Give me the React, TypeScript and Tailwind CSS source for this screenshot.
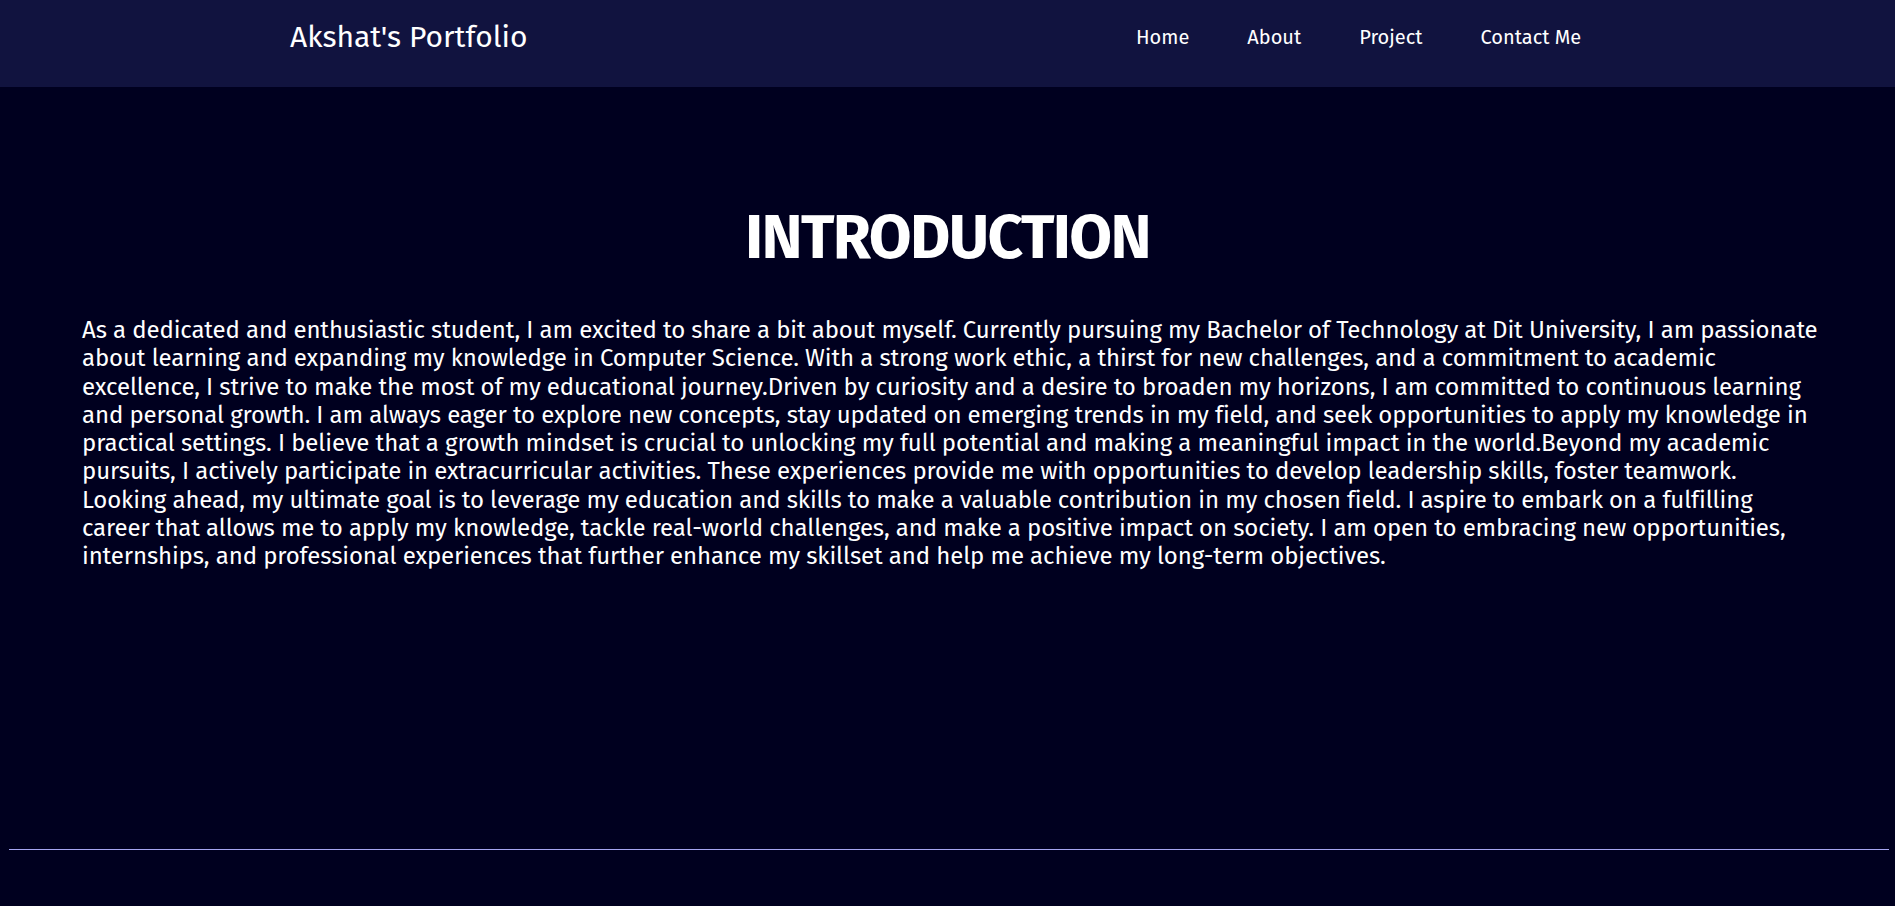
export default function App() {
  return (
    <div className="min-h-screen bg-[#00001f] font-['Fira_Sans','Lato',sans-serif] text-white">
      {/* ---------- NAVBAR ---------- */}
      <header className="h-[87px] bg-[#11133f] flex items-center pb-[13px] pl-[290px]">
        <div className="w-[846px] text-[30px] leading-[36px]">Akshat's Portfolio</div>
        <nav className="flex gap-[58px] text-[20px] leading-[24px]">
          <a href="#">Home</a>
          <a href="#">About</a>
          <a href="#">Project</a>
          <a href="#">Contact Me</a>
        </nav>
      </header>

      {/* ---------- INTRO ---------- */}
      <main className="pt-[112px]">
        <h1 className="text-center text-[62px] leading-[77px] font-bold tracking-[-1.6px]">INTRODUCTION</h1>
        <p className="mt-[40px] pl-[82px] pr-[74px] text-[24px] leading-[28.3px] tracking-[-0.11px]">
          As a dedicated and enthusiastic student, I am excited to share a bit about myself. Currently pursuing my Bachelor of Technology at Dit University, I am passionate about learning and expanding my knowledge in Computer Science. With a strong work ethic, a thirst for new challenges, and a commitment to academic excellence, I strive to make the most of my educational journey.Driven by curiosity and a desire to broaden my horizons, I am committed to continuous learning and personal growth. I am always eager to explore new concepts, stay updated on emerging trends in my field, and seek opportunities to apply my knowledge in practical settings. I believe that a growth mindset is crucial to unlocking my full potential and making a meaningful impact in the world.Beyond my academic pursuits, I actively participate in extracurricular activities. These experiences provide me with opportunities to develop leadership skills, foster teamwork. Looking ahead, my ultimate goal is to leverage my education and skills to make a valuable contribution in my chosen field. I aspire to embark on a fulfilling career that allows me to apply my knowledge, tackle real-world challenges, and make a positive impact on society. I am open to embracing new opportunities, internships, and professional experiences that further enhance my skillset and help me achieve my long-term objectives.
        </p>
      </main>

      {/* ---------- FOOTER LINE ---------- */}
      <div className="pt-[278px] pb-[56px]">
        <hr className="ml-[9px] mr-[6px] border-0 h-px bg-[#a6a6f2]" />
      </div>
    </div>
  );
}
